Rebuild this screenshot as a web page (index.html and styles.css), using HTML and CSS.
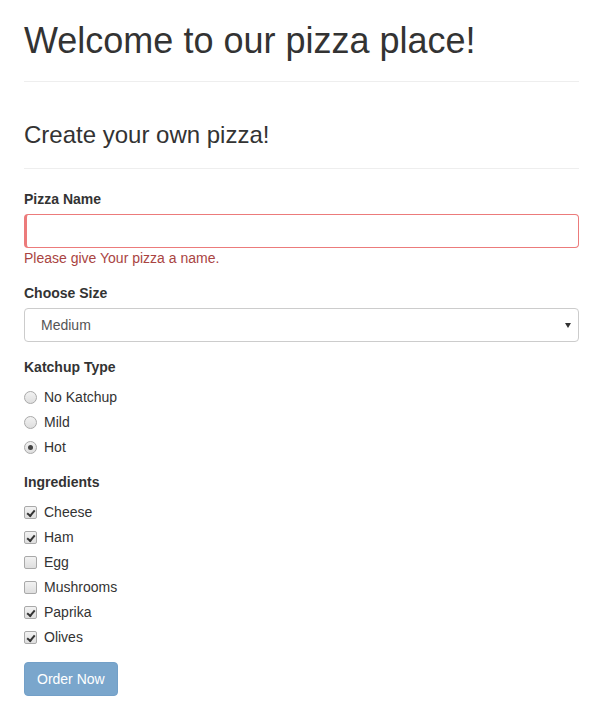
FILE: index.html
```html
<!DOCTYPE html>
<html>
<head>
<meta charset="utf-8">
<link rel="stylesheet" href="styles.css">
</head>
<body>
<div class="container">
  <div class="page-header">
    <h1 class="title">Welcome to our pizza place!</h1>
  </div>
  <div class="page-header sub">
    <h3 class="subtitle">Create your own pizza!</h3>
  </div>
  <form class="form">
    <div class="form-group">
      <label class="control-label">Pizza Name</label>
      <input class="form-control invalid" type="text">
      <div class="help-error">Please give Your pizza a name.</div>
    </div>
    <div class="form-group">
      <label class="control-label">Choose Size</label>
      <div class="select-wrap">
        <select class="form-control select">
          <option>Small</option>
          <option selected>Medium</option>
          <option>Large</option>
        </select>
      </div>
    </div>
    <div class="form-group">
      <label class="control-label">Katchup Type</label>
      <div class="choices">
        <label class="choice"><span class="radio"></span>No Katchup</label>
        <label class="choice"><span class="radio"></span>Mild</label>
        <label class="choice"><span class="radio on"></span>Hot</label>
      </div>
    </div>
    <div class="form-group">
      <label class="control-label">Ingredients</label>
      <div class="choices">
        <label class="choice"><span class="check on"></span>Cheese</label>
        <label class="choice"><span class="check on"></span>Ham</label>
        <label class="choice"><span class="check"></span>Egg</label>
        <label class="choice"><span class="check"></span>Mushrooms</label>
        <label class="choice"><span class="check on"></span>Paprika</label>
        <label class="choice"><span class="check on"></span>Olives</label>
      </div>
    </div>
    <button class="btn" type="button">Order Now</button>
  </form>
</div>
</body>
</html>
```

FILE: styles.css
```css
* { box-sizing: border-box; }
html, body { margin: 0; padding: 0; background: #fff; }
body {
  font-family: "Liberation Sans", Arial, Helvetica, sans-serif;
  font-size: 14px;
  line-height: 20px;
  color: #333;
}
.container {
  width: 555px;
  margin-left: 24px;
  padding-top: 21px;
}
.page-header {
  padding-bottom: 20px;
  border-bottom: 1px solid #eee;
}
.page-header.sub {
  margin-top: 40px;
  margin-bottom: 20px;
}
.title {
  margin: 0;
  font-size: 36px;
  line-height: 40px;
  font-weight: 500;
}
.subtitle {
  margin: 0;
  font-size: 24px;
  line-height: 26px;
  font-weight: 500;
}
.form-group { margin-bottom: 15px; }
.control-label {
  display: block;
  font-weight: bold;
  margin-bottom: 5px;
  line-height: 20px;
}
.form-control {
  display: block;
  width: 100%;
  height: 34px;
  padding: 6px 12px;
  font-family: inherit;
  font-size: 14px;
  line-height: 20px;
  color: #555;
  background: #fff;
  border: 1px solid #ccc;
  border-radius: 4px;
  outline: none;
}
.invalid {
  border-color: #ec7b7b;
  border-left: 3px solid #ec7b7b;
}
.help-error {
  color: #a94442;
  line-height: 20px;
}
.select-wrap { position: relative; }
.select {
  appearance: none;
  -webkit-appearance: none;
  padding-left: 16px;
}
.select-wrap::after {
  content: "";
  position: absolute;
  right: 8px;
  top: 15px;
  border-left: 3.5px solid transparent;
  border-right: 3.5px solid transparent;
  border-top: 5px solid #333;
}
.choices {
  margin-top: 10px;
  display: flex;
  flex-direction: column;
  gap: 5px;
}
.choice {
  display: flex;
  align-items: flex-start;
  line-height: 20px;
  height: 20px;
}
.radio, .check {
  width: 13px;
  height: 13px;
  margin-top: 4px;
  margin-right: 7px;
  flex: none;
  border: 1px solid #a9a9a9;
  background: linear-gradient(#f2f2f2, #dedede);
  position: relative;
}
.radio { border-radius: 50%; }
.radio.on::after {
  content: "";
  position: absolute;
  left: 3px;
  top: 3px;
  width: 5px;
  height: 5px;
  border-radius: 50%;
  background: #444;
}
.check { border-radius: 2px; }
.check.on::after {
  content: "";
  position: absolute;
  left: 2px;
  top: 1px;
  width: 6px;
  height: 3px;
  border-left: 2px solid #333;
  border-bottom: 2px solid #333;
  transform: translate(0, 2px) rotate(-50deg);
  transform-origin: center;
}
.btn {
  display: inline-block;
  height: 34px;
  padding: 6px 12px;
  font-family: inherit;
  font-size: 14px;
  line-height: 20px;
  color: #fff;
  background: #7aa6cc;
  border: 1px solid #73a0c8;
  border-radius: 4px;
  cursor: not-allowed;
}
```
